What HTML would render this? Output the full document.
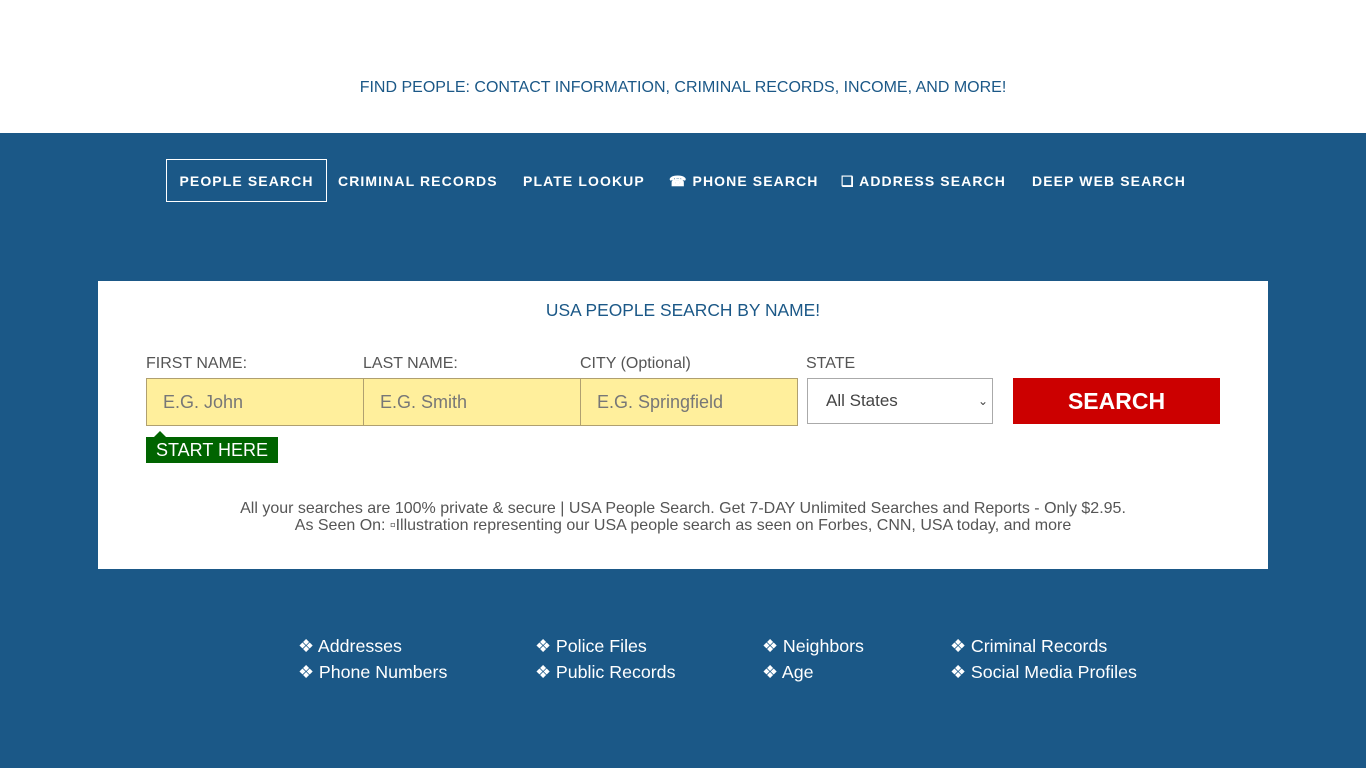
<!DOCTYPE html>
<html><head><meta charset="utf-8"><style>
*{box-sizing:border-box;margin:0;padding:0}
body{width:1366px;height:768px;background:#1b5887;font-family:"Liberation Sans",sans-serif;position:relative;overflow:hidden}
.top{position:absolute;left:0;top:0;width:1366px;height:133px;background:#fff}
.tag{position:absolute;top:79px;width:100%;text-align:center;color:#1b5887;font-size:16px}
.nav a{position:absolute;top:159px;height:43px;line-height:44px;color:#fff;font-weight:bold;font-size:14px;letter-spacing:1.1px;white-space:nowrap}
.card{position:absolute;left:98px;top:281px;width:1170px;height:288px;background:#fff}
.h{position:absolute;top:300px;width:100%;text-align:center;color:#1b5887;font-size:17.4px}
.lbl{position:absolute;top:355px;color:#555;font-size:16px}
.inp{position:absolute;top:378px;height:48px;background:#ffef9c;border:1px solid #b0a070;color:#777;font-size:18px;line-height:46px;padding-left:16px}
.sel{position:absolute;left:807px;top:378px;width:186px;height:46px;border:1px solid #aaa;background:#fff;color:#444;font-size:17px;line-height:44px;padding-left:18px}
.btn{position:absolute;left:1013px;top:378px;width:207px;height:46px;background:#cc0000;color:#fff;font-weight:bold;font-size:23px;text-align:center;line-height:46px}
.start{position:absolute;left:146px;top:437px;width:132px;height:26px;background:#006400;color:#fff;font-size:18px;line-height:26px;padding-left:10px}
.start:before{content:"";position:absolute;left:8px;top:-6px;border:6px solid transparent;border-top:0;border-bottom-color:#006400}
.note{position:absolute;top:500px;width:1366px;text-align:center;color:#555;font-size:16px;line-height:17px}
.f{position:absolute;color:#fff;font-size:17.8px}
</style></head><body>
<div class="top"></div>
<div class="tag">FIND PEOPLE: CONTACT INFORMATION, CRIMINAL RECORDS, INCOME, AND MORE!</div>
<div class="nav">
<a style="left:166px;width:161px;border:1px solid #fff;text-align:center;line-height:42px">PEOPLE SEARCH</a>
<a style="left:338px">CRIMINAL RECORDS</a>
<a style="left:523px">PLATE LOOKUP</a>
<a style="left:669px">☎ PHONE SEARCH</a>
<a style="left:841px">❏ ADDRESS SEARCH</a>
<a style="left:1032px">DEEP WEB SEARCH</a>
</div>
<div class="card"></div>
<div class="h">USA PEOPLE SEARCH BY NAME!</div>
<div class="lbl" style="left:146px">FIRST NAME:</div>
<div class="lbl" style="left:363px">LAST NAME:</div>
<div class="lbl" style="left:580px">CITY (Optional)</div>
<div class="lbl" style="left:806px">STATE</div>
<div class="inp" style="left:146px;width:218px">E.G. John</div>
<div class="inp" style="left:363px;width:218px">E.G. Smith</div>
<div class="inp" style="left:580px;width:218px">E.G. Springfield</div>
<div class="sel">All States<span style="position:absolute;right:4px;font-size:12px">⌄</span></div>
<div class="btn">SEARCH</div>
<div class="start">START HERE</div>
<div class="note">All your searches are 100% private &amp; secure | USA People Search. Get 7-DAY Unlimited Searches and Reports - Only $2.95.<br>As Seen On: ▫Illustration representing our USA people search as seen on Forbes, CNN, USA today, and more</div>
<div class="f" style="left:298px;top:636px">❖ Addresses</div>
<div class="f" style="left:298px;top:662px">❖ Phone Numbers</div>
<div class="f" style="left:535px;top:636px">❖ Police Files</div>
<div class="f" style="left:535px;top:662px">❖ Public Records</div>
<div class="f" style="left:762px;top:636px">❖ Neighbors</div>
<div class="f" style="left:762px;top:662px">❖ Age</div>
<div class="f" style="left:950px;top:636px">❖ Criminal Records</div>
<div class="f" style="left:950px;top:662px">❖ Social Media Profiles</div>
</body></html>
